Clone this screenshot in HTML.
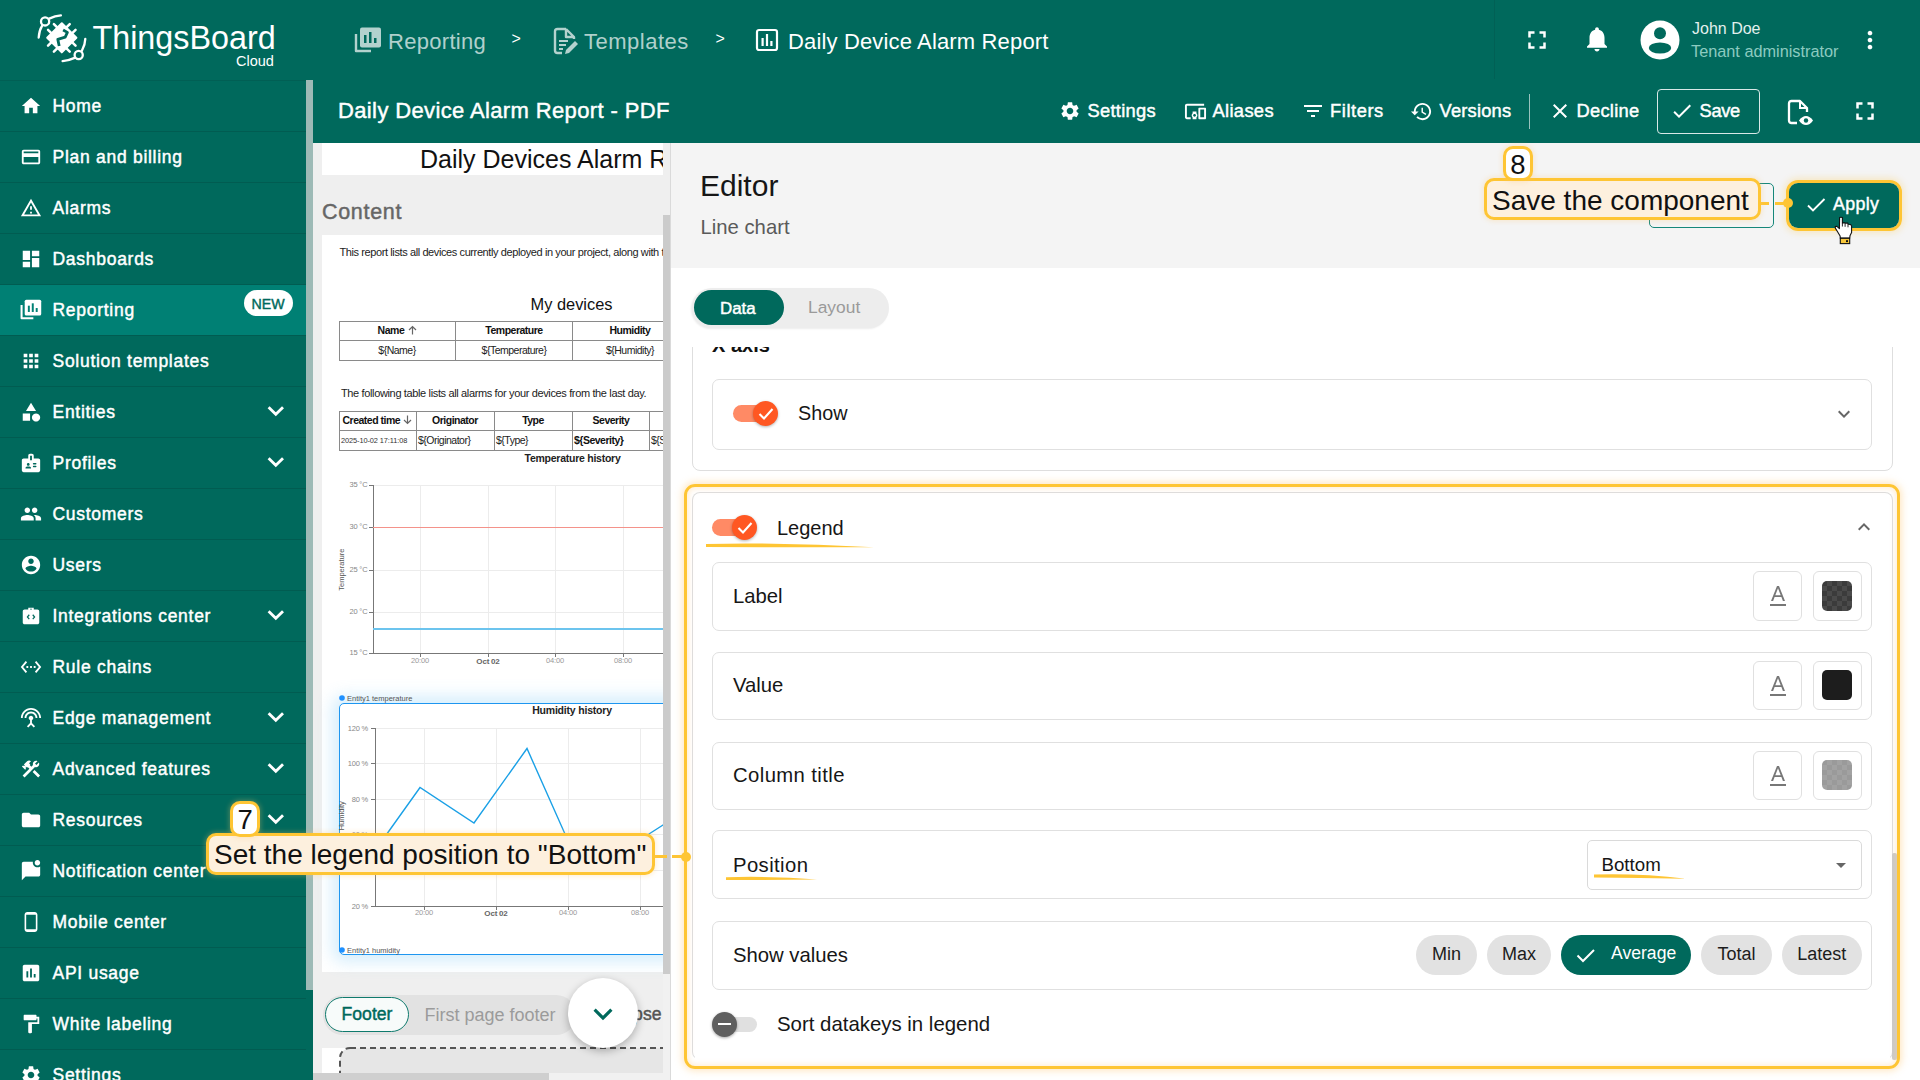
<!DOCTYPE html><html><head><meta charset="utf-8"><style>
html,body{margin:0;padding:0;width:1920px;height:1080px;overflow:hidden;background:#fff;}
body{position:relative;font-family:"Liberation Sans",sans-serif;}
.a{position:absolute;display:block;}
.t{position:absolute;white-space:pre;line-height:1;}
svg.a{overflow:visible;}
</style></head><body>
<div class="a" style="left:0px;top:0px;width:1920px;height:143px;background:#00695c;"></div>
<div class="a" style="left:0px;top:80px;width:306px;height:1px;background:#015f54;"></div>
<div class="a" style="left:1494px;top:0px;width:1px;height:79px;background:#016055;"></div>
<svg class="a" style="left:36px;top:13px" width="52" height="52" viewBox="0 0 52 52">
<g fill="none" stroke="#fff" stroke-width="2.3" stroke-linecap="round">
<path d="M2.7 24.5 C3 20 4 16 6.2 12.6"/><circle cx="9.1" cy="8.4" r="4.1"/><path d="M13.2 5.6 C17 3.8 21 2.7 24.9 2.4"/>
<path d="M49.3 25.9 C49.2 30 48 34 45.9 37.8"/><circle cx="42.7" cy="42" r="4.1"/><path d="M38.6 44.9 C35 46.6 31 47.8 26.6 48.1"/>
<path d="M30.18 14.58l3.54 -3.54 M36.02 20.42l3.54 -3.54 M36.02 29.18l3.54 3.54 M30.18 35.02l3.54 3.54 M21.42 35.02l-3.54 3.54 M15.58 29.18l-3.54 3.54 M15.58 20.42l-3.54 -3.54 M21.42 14.58l-3.54 -3.54" stroke-width="2.5"/>
</g>
<polygon points="25.80,10.20 40.40,24.80 25.80,39.40 11.20,24.80" fill="#fff" stroke="#fff" stroke-width="2" stroke-linejoin="round"/>
<path d="M27.1 17 L31.4 19.4 L29.2 24.2 L21.8 26.4 L23.2 33" fill="none" stroke="#00695c" stroke-width="2.8" stroke-linejoin="round"/>
</svg>
<div class="t" style="left:92.5px;top:21.7px;font-size:32.3px;font-weight:400;color:#fff;">ThingsBoard</div>
<div class="t" style="left:236.0px;top:53.7px;font-size:14.5px;font-weight:400;color:#fff;">Cloud</div>
<svg class="a" style="left:354px;top:27px" width="28" height="27" viewBox="0 0 28 27">
<path d="M2 7v17h15" fill="none" stroke="rgba(255,255,255,0.7)" stroke-width="2.4" stroke-linejoin="round"/>
<rect x="6" y="0.5" width="21" height="20" rx="2" fill="rgba(255,255,255,0.7)"/>
<rect x="10" y="8" width="2.5" height="8" fill="#00695c"/><rect x="15" y="5" width="2.5" height="11" fill="#00695c"/><rect x="20" y="11" width="2.5" height="5" fill="#00695c"/>
</svg>
<div class="t" style="left:388.0px;top:31.4px;font-size:22px;font-weight:400;color:rgba(255,255,255,0.7);letter-spacing:0.3px;">Reporting</div>
<div class="t" style="left:511.5px;top:31.0px;font-size:16px;font-weight:400;color:#fff;">&gt;</div>
<svg class="a" style="left:553px;top:27px" width="26" height="28" viewBox="0 0 26 28">
<path d="M13 2H4.5C3 2 2 3 2 4.5v19C2 25 3 26 4.5 26H9M13 2l8 8v2M13 2v8h8" fill="none" stroke="rgba(255,255,255,0.7)" stroke-width="2.4" stroke-linejoin="round"/>
<path d="M6 14h9M6 18h7M6 22h4" stroke="rgba(255,255,255,0.7)" stroke-width="2.2"/>
<path d="M12 27l1-4 9-9 3 3-9 9z" fill="rgba(255,255,255,0.7)"/>
</svg>
<div class="t" style="left:584.0px;top:31.4px;font-size:22px;font-weight:400;color:rgba(255,255,255,0.7);letter-spacing:0.5px;">Templates</div>
<div class="t" style="left:715.5px;top:31.0px;font-size:16px;font-weight:400;color:#fff;">&gt;</div>
<svg class="a" style="left:755px;top:28px" width="24" height="24" viewBox="0 0 24 24">
<rect x="2" y="2" width="20" height="20" rx="2" fill="none" stroke="#fff" stroke-width="2.2"/>
<rect x="6.5" y="10" width="2.2" height="8" fill="#fff"/><rect x="10.9" y="6" width="2.2" height="12" fill="#fff"/><rect x="15.3" y="13" width="2.2" height="5" fill="#fff"/>
</svg>
<div class="t" style="left:788.0px;top:31.4px;font-size:22px;font-weight:400;color:#fff;letter-spacing:0.15px;">Daily Device Alarm Report</div>
<svg class="a" style="left:1522px;top:24.5px;" width="30" height="30" viewBox="0 0 24 24"><path fill="#fff" d="M7 14H5v5h5v-2H7v-3zm-2-4h2V7h3V5H5v5zm12 7h-3v2h5v-5h-2v3zM14 5v2h3v3h2V5h-5z"/></svg>
<svg class="a" style="left:1582px;top:24px;" width="30" height="30" viewBox="0 0 24 24"><path fill="#fff" d="M12 22c1.1 0 2-.9 2-2h-4c0 1.1.89 2 2 2zm6-6v-5c0-3.07-1.64-5.64-4.5-6.32V4c0-.83-.67-1.5-1.5-1.5s-1.5.67-1.5 1.5v.68C7.63 5.36 6 7.92 6 11v5l-2 2v1h16v-1l-2-2z"/></svg>
<svg class="a" style="left:1640px;top:20px" width="40" height="40" viewBox="0 0 40 40">
<circle cx="20" cy="20" r="19.5" fill="#fff"/>
<circle cx="20" cy="13.2" r="6" fill="#00695c"/>
<ellipse cx="20" cy="28" rx="11.2" ry="5.5" fill="#00695c"/>
</svg>
<div class="t" style="left:1692.0px;top:20.5px;font-size:16px;font-weight:400;color:#e3f0ee;">John Doe</div>
<div class="t" style="left:1691.0px;top:43.2px;font-size:16.3px;font-weight:400;color:#8ccbc0;">Tenant administrator</div>
<svg class="a" style="left:1856px;top:26px;" width="28" height="28" viewBox="0 0 24 24"><path fill="#fff" d="M12 8c1.1 0 2-.9 2-2s-.9-2-2-2-2 .9-2 2 .9 2 2 2zm0 2c-1.1 0-2 .9-2 2s.9 2 2 2 2-.9 2-2-.9-2-2-2zm0 6c-1.1 0-2 .9-2 2s.9 2 2 2 2-.9 2-2-.9-2-2-2z"/></svg>
<div class="t" style="left:338.0px;top:100.2px;font-size:22px;font-weight:400;color:#fff;-webkit-text-stroke:0.45px #fff;letter-spacing:0.37px;">Daily Device Alarm Report - PDF</div>
<svg class="a" style="left:1059px;top:100px;" width="22" height="22" viewBox="0 0 24 24"><path fill="#fff" d="M19.14 12.94c.04-.3.06-.61.06-.94 0-.32-.02-.64-.07-.94l2.03-1.58c.18-.14.23-.41.12-.61l-1.92-3.32c-.12-.22-.37-.29-.59-.22l-2.39.96c-.5-.38-1.03-.7-1.62-.94l-.36-2.54c-.04-.24-.24-.41-.48-.41h-3.84c-.24 0-.43.17-.47.41l-.36 2.540c-.59.24-1.13.57-1.62.94l-2.39-.96c-.22-.08-.47 0-.59.22L2.74 8.87c-.12.21-.08.47.12.61l2.03 1.58c-.05.3-.09.63-.09.94s.02.64.07.94l-2.03 1.58c-.18.14-.23.41-.12.61l1.92 3.32c.12.22.37.29.59.22l2.39-.96c.5.38 1.03.7 1.62.94l.36 2.54c.05.24.24.41.48.41h3.84c.24 0 .44-.17.47-.41l.36-2.54c.59-.24 1.13-.56 1.62-.94l2.39.96c.22.08.47 0 .59-.22l1.92-3.32c.12-.22.07-.47-.12-.61l-2.01-1.58zM12 15.6c-1.98 0-3.6-1.62-3.6-3.6s1.62-3.6 3.6-3.6 3.6 1.62 3.6 3.6-1.62 3.6-3.6 3.6z"/></svg>
<div class="t" style="left:1087.5px;top:102.0px;font-size:18.3px;font-weight:400;color:#fff;-webkit-text-stroke:0.45px #fff;letter-spacing:0.3px;">Settings</div>
<svg class="a" style="left:1184px;top:100px;" width="23" height="23" viewBox="0 0 24 24"><path fill="#fff" d="M3 6h18V4H3c-1.1 0-2 .9-2 2v12c0 1.1.9 2 2 2h4v-2H3V6zm10 6H9v1.78c-.61.55-1 1.33-1 2.22s.39 1.67 1 2.22V20h4v-1.78c.61-.55 1-1.34 1-2.22s-.39-1.67-1-2.22V12zm-2 5.5c-.83 0-1.5-.67-1.5-1.5s.67-1.5 1.5-1.5 1.5.67 1.5 1.5-.67 1.5-1.5 1.5zM22 8h-6c-.5 0-1 .5-1 1v10c0 .5.5 1 1 1h6c.5 0 1-.5 1-1V9c0-.5-.5-1-1-1zm-1 10h-4v-8h4v8z"/></svg>
<div class="t" style="left:1212.5px;top:102.0px;font-size:18.3px;font-weight:400;color:#fff;-webkit-text-stroke:0.45px #fff;letter-spacing:0.35px;">Aliases</div>
<svg class="a" style="left:1301px;top:99px;" width="24" height="24" viewBox="0 0 24 24"><path fill="#fff" d="M10 18h4v-2h-4v2zM3 6v2h18V6H3zm3 7h12v-2H6v2z"/></svg>
<div class="t" style="left:1330.0px;top:102.0px;font-size:18.3px;font-weight:400;color:#fff;-webkit-text-stroke:0.45px #fff;letter-spacing:0.58px;">Filters</div>
<svg class="a" style="left:1410px;top:100px;" width="23" height="23" viewBox="0 0 24 24"><path fill="#fff" d="M13 3c-4.97 0-9 4.03-9 9H1l3.89 3.89.07.14L9 12H6c0-3.87 3.13-7 7-7s7 3.13 7 7-3.13 7-7 7c-1.93 0-3.68-.79-4.94-2.06l-1.42 1.42C8.27 19.99 10.51 21 13 21c4.97 0 9-4.03 9-9s-4.03-9-9-9zm-1 5v5l4.28 2.54.72-1.21-3.5-2.08V8H12z"/></svg>
<div class="t" style="left:1439.5px;top:102.0px;font-size:18.3px;font-weight:400;color:#fff;-webkit-text-stroke:0.45px #fff;letter-spacing:0.21px;">Versions</div>
<div class="a" style="left:1529px;top:94px;width:1px;height:35px;background:rgba(255,255,255,0.6);"></div>
<svg class="a" style="left:1548px;top:99px;" width="24" height="24" viewBox="0 0 24 24"><path fill="#fff" d="M19 6.41L17.59 5 12 10.59 6.41 5 5 6.41 10.59 12 5 17.59 6.41 19 12 13.41 17.59 19 19 17.59 13.41 12z"/></svg>
<div class="t" style="left:1576.5px;top:102.0px;font-size:18.3px;font-weight:400;color:#fff;-webkit-text-stroke:0.45px #fff;letter-spacing:0.27px;">Decline</div>
<div class="a" style="left:1657px;top:89px;width:103px;height:45px;box-sizing:border-box;border:1px solid rgba(255,255,255,0.85);border-radius:4px;"></div>
<svg class="a" style="left:1670px;top:99px;" width="24" height="24" viewBox="0 0 24 24"><path fill="#fff" d="M9 16.17L4.83 12l-1.42 1.41L9 19 21 7l-1.41-1.41z"/></svg>
<div class="t" style="left:1699.5px;top:102.0px;font-size:18.3px;font-weight:400;color:#fff;-webkit-text-stroke:0.45px #fff;letter-spacing:-0.3px;">Save</div>
<svg class="a" style="left:1786px;top:99px" width="28" height="28" viewBox="0 0 28 28">
<path d="M11 24H5.5C4 24 3 23 3 21.5v-17C3 3 4 2 5.5 2H14l7 7v4" fill="none" stroke="#fff" stroke-width="2.3" stroke-linejoin="round"/>
<path d="M14 2v7h7" fill="none" stroke="#fff" stroke-width="2"/>
<path d="M13 21.5c2-3 4.5-4.5 7-4.5s5 1.5 7 4.5c-2 3-4.5 4.5-7 4.5s-5-1.5-7-4.5z" fill="#fff"/>
<circle cx="20" cy="21.5" r="2.2" fill="#00695c"/>
</svg>
<svg class="a" style="left:1850px;top:96px;" width="30" height="30" viewBox="0 0 24 24"><path fill="#fff" d="M7 14H5v5h5v-2H7v-3zm-2-4h2V7h3V5H5v5zm12 7h-3v2h5v-5h-2v3zM14 5v2h3v3h2V5h-5z"/></svg>
<div class="a" style="left:0px;top:81px;width:306px;height:999px;background:#00695c;"></div>
<svg class="a" style="left:20px;top:94.5px;" width="22" height="22" viewBox="0 0 24 24"><path fill="#fff" d="M10 20v-6h4v6h5v-8h3L12 3 2 12h3v8z"/></svg>
<div class="t" style="left:52.5px;top:97.8px;font-size:17.5px;font-weight:400;color:#fff;-webkit-text-stroke:0.45px #fff;letter-spacing:0.72px;">Home</div>
<div class="a" style="left:0px;top:131px;width:306px;height:1px;background:#015c51;"></div>
<svg class="a" style="left:20px;top:145.5px;" width="22" height="22" viewBox="0 0 24 24"><path fill="#fff" d="M20 4H4c-1.11 0-1.99.89-1.99 2L2 18c0 1.11.89 2 2 2h16c1.11 0 2-.89 2-2V6c0-1.11-.89-2-2-2zm0 14H4v-6h16v6zm0-10H4V6h16v2z"/></svg>
<div class="t" style="left:52.5px;top:148.8px;font-size:17.5px;font-weight:400;color:#fff;-webkit-text-stroke:0.45px #fff;letter-spacing:0.72px;">Plan and billing</div>
<div class="a" style="left:0px;top:182px;width:306px;height:1px;background:#015c51;"></div>
<svg class="a" style="left:20px;top:196.5px;" width="22" height="22" viewBox="0 0 24 24"><path fill="#fff" d="M12 5.99L19.53 19H4.47L12 5.99M12 2L1 21h22L12 2zm1 14h-2v2h2v-2zm0-6h-2v4h2v-4z"/></svg>
<div class="t" style="left:52.5px;top:199.8px;font-size:17.5px;font-weight:400;color:#fff;-webkit-text-stroke:0.45px #fff;letter-spacing:0.72px;">Alarms</div>
<div class="a" style="left:0px;top:233px;width:306px;height:1px;background:#015c51;"></div>
<svg class="a" style="left:20px;top:247.5px;" width="22" height="22" viewBox="0 0 24 24"><path fill="#fff" d="M3 13h8V3H3v10zm0 8h8v-6H3v6zm10 0h8V11h-8v10zm0-18v6h8V3h-8z"/></svg>
<div class="t" style="left:52.5px;top:250.8px;font-size:17.5px;font-weight:400;color:#fff;-webkit-text-stroke:0.45px #fff;letter-spacing:0.72px;">Dashboards</div>
<div class="a" style="left:0px;top:285px;width:306px;height:50px;background:#008074;"></div>
<div class="a" style="left:0px;top:284px;width:306px;height:1px;background:#015c51;"></div>
<svg class="a" style="left:20px;top:298.5px" width="22" height="22" viewBox="0 0 28 27">
<path d="M2 7v17h15" fill="none" stroke="#fff" stroke-width="2.6" stroke-linejoin="round"/>
<rect x="6" y="0.5" width="21" height="20" rx="2" fill="#fff"/>
<rect x="10" y="8" width="2.5" height="8" fill="#008074"/><rect x="15" y="5" width="2.5" height="11" fill="#008074"/><rect x="20" y="11" width="2.5" height="5" fill="#008074"/>
</svg>
<div class="t" style="left:52.5px;top:301.8px;font-size:17.5px;font-weight:400;color:#fff;-webkit-text-stroke:0.45px #fff;letter-spacing:0.72px;">Reporting</div>
<div class="a" style="left:0px;top:335px;width:306px;height:1px;background:#015c51;"></div>
<svg class="a" style="left:20px;top:349.5px;" width="22" height="22" viewBox="0 0 24 24"><path fill="#fff" d="M4 8h4V4H4v4zm6 12h4v-4h-4v4zm-6 0h4v-4H4v4zm0-6h4v-4H4v4zm6 0h4v-4h-4v4zm6-10v4h4V4h-4zm-6 4h4V4h-4v4zm6 6h4v-4h-4v4zm0 6h4v-4h-4v4z"/></svg>
<div class="t" style="left:52.5px;top:352.8px;font-size:17.5px;font-weight:400;color:#fff;-webkit-text-stroke:0.45px #fff;letter-spacing:0.72px;">Solution templates</div>
<div class="a" style="left:0px;top:386px;width:306px;height:1px;background:#015c51;"></div>
<svg class="a" style="left:20px;top:400.5px;" width="22" height="22" viewBox="0 0 24 24"><path fill="#fff" d="M12 2l-5.5 9h11z M17.5 13.5a4.5 4.5 0 1 0 0.01 0z M3 13.5h8v8H3z"/></svg>
<div class="t" style="left:52.5px;top:403.8px;font-size:17.5px;font-weight:400;color:#fff;-webkit-text-stroke:0.45px #fff;letter-spacing:0.72px;">Entities</div>
<svg class="a" style="left:266px;top:404.3px" width="20" height="14" viewBox="0 0 20 14"><path d="M2.6 3.2L9.8 10.3L17 3.2" fill="none" stroke="#fff" stroke-width="2.8"/></svg>
<div class="a" style="left:0px;top:437px;width:306px;height:1px;background:#015c51;"></div>
<svg class="a" style="left:20px;top:451.5px;" width="22" height="22" viewBox="0 0 24 24"><path fill="#fff" d="M20 7h-5V4c0-1.1-.9-2-2-2h-2c-1.1 0-2 .9-2 2v3H4c-1.1 0-2 .9-2 2v11c0 1.1.9 2 2 2h16c1.1 0 2-.9 2-2V9c0-1.1-.9-2-2-2zM9 12c.83 0 1.5.67 1.5 1.5S9.83 15 9 15s-1.5-.67-1.5-1.5S8.17 12 9 12zm3 6H6v-.43c0-.6.36-1.15.92-1.39.64-.28 1.34-.43 2.08-.43s1.44.15 2.08.43c.55.24.92.78.92 1.39V18zm1-9h-2V4h2v5zm4.25 7.5h-2.5c-.41 0-.75-.34-.75-.75s.34-.75.75-.75h2.5c.41 0 .75.34.75.75s-.34.75-.75.75zm0-3h-2.5c-.41 0-.75-.34-.75-.75s.34-.75.75-.75h2.5c.41 0 .75.34.75.75s-.34.75-.75.75z"/></svg>
<div class="t" style="left:52.5px;top:454.8px;font-size:17.5px;font-weight:400;color:#fff;-webkit-text-stroke:0.45px #fff;letter-spacing:0.72px;">Profiles</div>
<svg class="a" style="left:266px;top:455.3px" width="20" height="14" viewBox="0 0 20 14"><path d="M2.6 3.2L9.8 10.3L17 3.2" fill="none" stroke="#fff" stroke-width="2.8"/></svg>
<div class="a" style="left:0px;top:488px;width:306px;height:1px;background:#015c51;"></div>
<svg class="a" style="left:20px;top:502.5px;" width="22" height="22" viewBox="0 0 24 24"><path fill="#fff" d="M16 11c1.66 0 2.99-1.34 2.99-3S17.66 5 16 5c-1.66 0-3 1.34-3 3s1.34 3 3 3zm-8 0c1.66 0 2.99-1.34 2.99-3S9.66 5 8 5C6.34 5 5 6.34 5 8s1.34 3 3 3zm0 2c-2.33 0-7 1.17-7 3.5V19h14v-2.5c0-2.33-4.67-3.5-7-3.5zm8 0c-.29 0-.62.02-.97.05 1.16.84 1.97 1.97 1.97 3.45V19h6v-2.5c0-2.33-4.67-3.5-7-3.5z"/></svg>
<div class="t" style="left:52.5px;top:505.8px;font-size:17.5px;font-weight:400;color:#fff;-webkit-text-stroke:0.45px #fff;letter-spacing:0.72px;">Customers</div>
<div class="a" style="left:0px;top:539px;width:306px;height:1px;background:#015c51;"></div>
<svg class="a" style="left:20px;top:553.5px;" width="22" height="22" viewBox="0 0 24 24"><path fill="#fff" d="M12 2C6.48 2 2 6.48 2 12s4.48 10 10 10 10-4.48 10-10S17.52 2 12 2zm0 3c1.66 0 3 1.34 3 3s-1.34 3-3 3-3-1.34-3-3 1.34-3 3-3zm0 14.2c-2.5 0-4.71-1.28-6-3.22.03-1.99 4-3.08 6-3.08 1.99 0 5.97 1.09 6 3.08-1.29 1.94-3.5 3.22-6 3.22z"/></svg>
<div class="t" style="left:52.5px;top:556.8px;font-size:17.5px;font-weight:400;color:#fff;-webkit-text-stroke:0.45px #fff;letter-spacing:0.72px;">Users</div>
<div class="a" style="left:0px;top:590px;width:306px;height:1px;background:#015c51;"></div>
<svg class="a" style="left:20px;top:604.5px;" width="22" height="22" viewBox="0 0 24 24"><path fill="#fff" d="M9 3h6v2h4c1.1 0 2 .9 2 2v12c0 1.1-.9 2-2 2H5c-1.1 0-2-.9-2-2V7c0-1.1.9-2 2-2h4zM11 5h2V4h-2zM9.6 10.2L7.2 13l2.4 2.8 1-.9-1.6-1.9 1.6-1.9zM14.4 10.2l-1 .9 1.6 1.9-1.6 1.9 1 .9 2.4-2.8z"/></svg>
<div class="t" style="left:52.5px;top:607.8px;font-size:17.5px;font-weight:400;color:#fff;-webkit-text-stroke:0.45px #fff;letter-spacing:0.72px;">Integrations center</div>
<svg class="a" style="left:266px;top:608.3px" width="20" height="14" viewBox="0 0 20 14"><path d="M2.6 3.2L9.8 10.3L17 3.2" fill="none" stroke="#fff" stroke-width="2.8"/></svg>
<div class="a" style="left:0px;top:641px;width:306px;height:1px;background:#015c51;"></div>
<svg class="a" style="left:20px;top:655.5px;" width="22" height="22" viewBox="0 0 24 24"><path fill="#fff" d="M7.77 6.76L6.23 5.48.82 12l5.41 6.52 1.54-1.28L3.42 12l4.35-5.24zM7 13h2v-2H7v2zm10-2h-2v2h2v-2zm-6 2h2v-2h-2v2zm6.77-7.52l-1.54 1.28L20.58 12l-4.35 5.24 1.54 1.28L23.18 12l-5.41-6.52z"/></svg>
<div class="t" style="left:52.5px;top:658.8px;font-size:17.5px;font-weight:400;color:#fff;-webkit-text-stroke:0.45px #fff;letter-spacing:0.72px;">Rule chains</div>
<div class="a" style="left:0px;top:692px;width:306px;height:1px;background:#015c51;"></div>
<svg class="a" style="left:20px;top:706.5px;" width="22" height="22" viewBox="0 0 24 24"><path fill="#fff" d="M12 5c-3.87 0-7 3.13-7 7h2c0-2.76 2.24-5 5-5s5 2.24 5 5h2c0-3.87-3.13-7-7-7zm1 9.29c.88-.39 1.5-1.26 1.5-2.29 0-1.380-1.12-2.5-2.5-2.5S9.5 10.62 9.5 12c0 1.02.62 1.9 1.5 2.29v3.3L7.59 21 9 22.41l3-3 3 3L16.41 21 13 17.59v-3.3zM12 1C5.93 1 1 5.93 1 12h2c0-4.97 4.03-9 9-9s9 4.03 9 9h2c0-6.070-4.93-11-11-11z"/></svg>
<div class="t" style="left:52.5px;top:709.8px;font-size:17.5px;font-weight:400;color:#fff;-webkit-text-stroke:0.45px #fff;letter-spacing:0.72px;">Edge management</div>
<svg class="a" style="left:266px;top:710.3px" width="20" height="14" viewBox="0 0 20 14"><path d="M2.6 3.2L9.8 10.3L17 3.2" fill="none" stroke="#fff" stroke-width="2.8"/></svg>
<div class="a" style="left:0px;top:743px;width:306px;height:1px;background:#015c51;"></div>
<svg class="a" style="left:20px;top:757.5px;" width="22" height="22" viewBox="0 0 24 24"><path fill="#fff" d="M13.78 15.3l6 6 2.11-2.16-6-6-2.11 2.16zM17.5 10c1.93 0 3.5-1.57 3.5-3.5 0-.58-.16-1.12-.41-1.6l-2.7 2.7-1.49-1.49 2.7-2.7c-.48-.25-1.02-.41-1.6-.41C15.57 3 14 4.57 14 6.5c0 .41.08.8.21 1.16l-1.85 1.85-1.78-1.78.71-.71-1.41-1.41L12 3.49c-1.17-1.17-3.07-1.17-4.24 0L4.22 7.03l1.41 1.41H2.81l-.71.71 3.54 3.54.71-.71V9.15l1.41 1.41.71-.71 1.78 1.78-7.41 7.41 2.12 2.12L16.34 9.79c.36.13.75.21 1.16.21z"/></svg>
<div class="t" style="left:52.5px;top:760.8px;font-size:17.5px;font-weight:400;color:#fff;-webkit-text-stroke:0.45px #fff;letter-spacing:0.72px;">Advanced features</div>
<svg class="a" style="left:266px;top:761.3px" width="20" height="14" viewBox="0 0 20 14"><path d="M2.6 3.2L9.8 10.3L17 3.2" fill="none" stroke="#fff" stroke-width="2.8"/></svg>
<div class="a" style="left:0px;top:794px;width:306px;height:1px;background:#015c51;"></div>
<svg class="a" style="left:20px;top:808.5px;" width="22" height="22" viewBox="0 0 24 24"><path fill="#fff" d="M10 4H4c-1.1 0-1.99.9-1.99 2L2 18c0 1.1.9 2 2 2h16c1.1 0 2-.9 2-2V8c0-1.1-.9-2-2-2h-8l-2-2z"/></svg>
<div class="t" style="left:52.5px;top:811.8px;font-size:17.5px;font-weight:400;color:#fff;-webkit-text-stroke:0.45px #fff;letter-spacing:0.72px;">Resources</div>
<svg class="a" style="left:266px;top:812.3px" width="20" height="14" viewBox="0 0 20 14"><path d="M2.6 3.2L9.8 10.3L17 3.2" fill="none" stroke="#fff" stroke-width="2.8"/></svg>
<div class="a" style="left:0px;top:845px;width:306px;height:1px;background:#015c51;"></div>
<svg class="a" style="left:20px;top:859.5px;" width="22" height="22" viewBox="0 0 24 24"><path fill="#fff" d="M22 6.98V16c0 1.1-.9 2-2 2H6l-4 4V4c0-1.1.9-2 2-2h10.1c-.06.32-.1.66-.1 1 0 2.76 2.24 5 5 5 1.13 0 2.16-.39 3-1.02zM16 3c0 1.66 1.34 3 3 3s3-1.34 3-3-1.34-3-3-3-3 1.34-3 3z"/></svg>
<div class="t" style="left:52.5px;top:862.8px;font-size:17.5px;font-weight:400;color:#fff;-webkit-text-stroke:0.45px #fff;letter-spacing:0.72px;">Notification center</div>
<div class="a" style="left:0px;top:896px;width:306px;height:1px;background:#015c51;"></div>
<svg class="a" style="left:20px;top:910.5px;" width="22" height="22" viewBox="0 0 24 24"><path fill="#fff" d="M16 1H8C6.34 1 5 2.34 5 4v16c0 1.66 1.34 3 3 3h8c1.66 0 3-1.34 3-3V4c0-1.66-1.34-3-3-3zm1.25 19H6.75V4h10.5v16z"/></svg>
<div class="t" style="left:52.5px;top:913.8px;font-size:17.5px;font-weight:400;color:#fff;-webkit-text-stroke:0.45px #fff;letter-spacing:0.72px;">Mobile center</div>
<div class="a" style="left:0px;top:947px;width:306px;height:1px;background:#015c51;"></div>
<svg class="a" style="left:20px;top:961.5px;" width="22" height="22" viewBox="0 0 24 24"><path fill="#fff" d="M19 3H5c-1.1 0-2 .9-2 2v14c0 1.1.9 2 2 2h14c1.1 0 2-.9 2-2V5c0-1.1-.9-2-2-2zM9 17H7v-7h2v7zm4 0h-2V7h2v10zm4 0h-2v-4h2v4z"/></svg>
<div class="t" style="left:52.5px;top:964.8px;font-size:17.5px;font-weight:400;color:#fff;-webkit-text-stroke:0.45px #fff;letter-spacing:0.72px;">API usage</div>
<div class="a" style="left:0px;top:998px;width:306px;height:1px;background:#015c51;"></div>
<svg class="a" style="left:20px;top:1012.5px;" width="22" height="22" viewBox="0 0 24 24"><path fill="#fff" d="M18 4V3c0-.55-.45-1-1-1H5c-.55 0-1 .45-1 1v4c0 .55.45 1 1 1h12c.55 0 1-.45 1-1V6h1v4H9v11c0 .55.45 1 1 1h2c.55 0 1-.45 1-1v-9h8V4h-3z"/></svg>
<div class="t" style="left:52.5px;top:1015.8px;font-size:17.5px;font-weight:400;color:#fff;-webkit-text-stroke:0.45px #fff;letter-spacing:0.72px;">White labeling</div>
<div class="a" style="left:0px;top:1049px;width:306px;height:1px;background:#015c51;"></div>
<svg class="a" style="left:20px;top:1063.5px;" width="22" height="22" viewBox="0 0 24 24"><path fill="#fff" d="M19.14 12.94c.04-.3.06-.61.06-.94 0-.32-.02-.64-.07-.94l2.03-1.58c.18-.14.23-.41.12-.61l-1.92-3.32c-.12-.22-.37-.29-.59-.22l-2.39.96c-.5-.38-1.03-.7-1.62-.94l-.36-2.54c-.04-.24-.24-.41-.48-.41h-3.84c-.24 0-.43.17-.47.41l-.36 2.540c-.59.24-1.13.57-1.62.94l-2.39-.96c-.22-.08-.47 0-.59.22L2.74 8.87c-.12.21-.08.47.12.61l2.03 1.58c-.05.3-.09.63-.09.94s.02.64.07.94l-2.03 1.58c-.18.14-.23.41-.12.61l1.92 3.32c.12.22.37.29.59.22l2.39-.96c.5.38 1.03.7 1.62.94l.36 2.54c.05.24.24.41.48.41h3.84c.24 0 .44-.17.47-.41l.36-2.54c.59-.24 1.13-.56 1.62-.94l2.39.96c.22.08.47 0 .59-.22l1.92-3.32c.12-.22.07-.47-.12-.61l-2.01-1.58zM12 15.6c-1.98 0-3.6-1.62-3.6-3.6s1.62-3.6 3.6-3.6 3.6 1.62 3.6 3.6-1.62 3.6-3.6 3.6z"/></svg>
<div class="t" style="left:52.5px;top:1066.8px;font-size:17.5px;font-weight:400;color:#fff;-webkit-text-stroke:0.45px #fff;letter-spacing:0.72px;">Settings</div>
<div class="a" style="left:244px;top:290px;width:49px;height:25.5px;background:#fff;border-radius:13px;"></div>
<div class="t" style="left:251.5px;top:297.0px;font-size:14.2px;font-weight:400;color:#00695c;-webkit-text-stroke:0.4px #00695c;letter-spacing:0px;">NEW</div>
<div class="a" style="left:306px;top:80px;width:7px;height:910px;background:#9dbab6;"></div>
<div class="a" style="left:306px;top:990px;width:7px;height:90px;background:#00695c;"></div>
<div class="a" style="left:313px;top:143px;width:357px;height:937px;background:#efefef;"></div>
<div class="a" style="left:0;top:0;width:663px;height:1080px;overflow:hidden;">
<div class="a" style="left:322px;top:143px;width:400px;height:32px;background:#fff;"></div>
<div class="t" style="left:420.0px;top:146.5px;font-size:25px;font-weight:400;color:#111;">Daily Devices Alarm Report</div>
<div class="t" style="left:322.0px;top:201.8px;font-size:21.5px;font-weight:400;color:#666;-webkit-text-stroke:0.45px #666;letter-spacing:0.68px;">Content</div>
<div class="a" style="left:322px;top:234.5px;width:400px;height:737.5px;background:#fff;"></div>
<div class="t" style="left:339.5px;top:247.0px;font-size:11px;font-weight:400;color:#222;letter-spacing:-0.4px;">This report lists all devices currently deployed in your project, along with the</div>
<div class="t" style="left:530.5px;top:296.4px;font-size:16.4px;font-weight:400;color:#111;">My devices</div>
<div class="a" style="left:339px;top:321px;width:400px;height:1px;background:#8a8a8a;"></div>
<div class="a" style="left:339px;top:340px;width:400px;height:1px;background:#8a8a8a;"></div>
<div class="a" style="left:339px;top:360px;width:400px;height:1px;background:#8a8a8a;"></div>
<div class="a" style="left:339px;top:321px;width:1px;height:40px;background:#8a8a8a;"></div>
<div class="a" style="left:455px;top:321px;width:1px;height:40px;background:#8a8a8a;"></div>
<div class="a" style="left:572px;top:321px;width:1px;height:40px;background:#8a8a8a;"></div>
<div class="t" style="left:377.5px;top:325.1px;font-size:10.5px;font-weight:700;color:#111;letter-spacing:-0.4px;">Name</div>
<svg class="a" style="left:407.5px;top:325px" width="9" height="10" viewBox="0 0 9 10"><path d="M4.5 9.5V1.5M1 5l3.5-3.5L8 5" fill="none" stroke="#666" stroke-width="1.2"/></svg>
<div class="t" style="left:364.0px;width:300px;text-align:center;top:325.1px;font-size:10.5px;font-weight:700;color:#111;letter-spacing:-0.5px;">Temperature</div>
<div class="t" style="left:480.0px;width:300px;text-align:center;top:325.1px;font-size:10.5px;font-weight:700;color:#111;letter-spacing:-0.5px;">Humidity</div>
<div class="t" style="left:247.0px;width:300px;text-align:center;top:344.6px;font-size:10.5px;font-weight:400;color:#222;letter-spacing:-0.5px;">${Name}</div>
<div class="t" style="left:364.0px;width:300px;text-align:center;top:344.6px;font-size:10.5px;font-weight:400;color:#222;letter-spacing:-0.5px;">${Temperature}</div>
<div class="t" style="left:480.0px;width:300px;text-align:center;top:344.6px;font-size:10.5px;font-weight:400;color:#222;letter-spacing:-0.5px;">${Humidity}</div>
<div class="t" style="left:341.0px;top:387.5px;font-size:11px;font-weight:400;color:#222;letter-spacing:-0.36px;">The following table lists all alarms for your devices from the last day.</div>
<div class="a" style="left:339px;top:411px;width:400px;height:1px;background:#8a8a8a;"></div>
<div class="a" style="left:339px;top:430px;width:400px;height:1px;background:#8a8a8a;"></div>
<div class="a" style="left:339px;top:450px;width:400px;height:1px;background:#8a8a8a;"></div>
<div class="a" style="left:339px;top:411px;width:1px;height:40px;background:#8a8a8a;"></div>
<div class="a" style="left:416px;top:411px;width:1px;height:40px;background:#8a8a8a;"></div>
<div class="a" style="left:494px;top:411px;width:1px;height:40px;background:#8a8a8a;"></div>
<div class="a" style="left:572px;top:411px;width:1px;height:40px;background:#8a8a8a;"></div>
<div class="a" style="left:649px;top:411px;width:1px;height:40px;background:#8a8a8a;"></div>
<div class="t" style="left:342.5px;top:414.6px;font-size:10.5px;font-weight:700;color:#111;letter-spacing:-0.5px;">Created time</div>
<svg class="a" style="left:402.5px;top:414.5px" width="9" height="10" viewBox="0 0 9 10"><path d="M4.5 0.5V8.5M1 5l3.5 3.5L8 5" fill="none" stroke="#666" stroke-width="1.2"/></svg>
<div class="t" style="left:305.0px;width:300px;text-align:center;top:414.6px;font-size:10.5px;font-weight:700;color:#111;letter-spacing:-0.5px;">Originator</div>
<div class="t" style="left:383.0px;width:300px;text-align:center;top:414.6px;font-size:10.5px;font-weight:700;color:#111;letter-spacing:-0.5px;">Type</div>
<div class="t" style="left:461.0px;width:300px;text-align:center;top:414.6px;font-size:10.5px;font-weight:700;color:#111;letter-spacing:-0.5px;">Severity</div>
<div class="t" style="left:341.0px;top:436.7px;font-size:7.4px;font-weight:400;color:#333;letter-spacing:-0.1px;">2025-10-02 17:11:08</div>
<div class="t" style="left:418.0px;top:434.5px;font-size:10.5px;font-weight:400;color:#222;letter-spacing:-0.5px;">${Originator}</div>
<div class="t" style="left:496.0px;top:434.5px;font-size:10.5px;font-weight:400;color:#222;letter-spacing:-0.5px;">${Type}</div>
<div class="t" style="left:574.0px;top:434.5px;font-size:10.5px;font-weight:700;color:#111;letter-spacing:-0.5px;">${Severity}</div>
<div class="t" style="left:651.0px;top:434.5px;font-size:10.5px;font-weight:400;color:#222;letter-spacing:-0.5px;">${Status}</div>
<div class="t" style="left:422.5px;width:300px;text-align:center;top:452.6px;font-size:10.5px;font-weight:700;color:#222;letter-spacing:-0.25px;">Temperature history</div>
<div class="a" style="left:373px;top:485px;width:300px;height:1px;background:#ececec;"></div>
<div class="a" style="left:373px;top:527px;width:300px;height:1px;background:#ececec;"></div>
<div class="a" style="left:373px;top:570px;width:300px;height:1px;background:#ececec;"></div>
<div class="a" style="left:373px;top:612px;width:300px;height:1px;background:#ececec;"></div>
<div class="a" style="left:420px;top:485px;width:1px;height:169px;background:#ececec;"></div>
<div class="a" style="left:488px;top:485px;width:1px;height:169px;background:#ececec;"></div>
<div class="a" style="left:555px;top:485px;width:1px;height:169px;background:#ececec;"></div>
<div class="a" style="left:623px;top:485px;width:1px;height:169px;background:#ececec;"></div>
<div class="a" style="left:373px;top:485px;width:1px;height:169px;background:#777;"></div>
<div class="a" style="left:373px;top:653px;width:300px;height:1px;background:#777;"></div>
<div class="a" style="left:369px;top:485px;width:4px;height:1px;background:#777;"></div>
<div class="t" style="left:349.5px;top:481.2px;font-size:7.5px;font-weight:400;color:#888;letter-spacing:-0.2px;">35 °C</div>
<div class="a" style="left:369px;top:527px;width:4px;height:1px;background:#777;"></div>
<div class="t" style="left:349.5px;top:523.2px;font-size:7.5px;font-weight:400;color:#888;letter-spacing:-0.2px;">30 °C</div>
<div class="a" style="left:369px;top:570px;width:4px;height:1px;background:#777;"></div>
<div class="t" style="left:349.5px;top:566.2px;font-size:7.5px;font-weight:400;color:#888;letter-spacing:-0.2px;">25 °C</div>
<div class="a" style="left:369px;top:612px;width:4px;height:1px;background:#777;"></div>
<div class="t" style="left:349.5px;top:608.2px;font-size:7.5px;font-weight:400;color:#888;letter-spacing:-0.2px;">20 °C</div>
<div class="a" style="left:369px;top:653px;width:4px;height:1px;background:#777;"></div>
<div class="t" style="left:349.5px;top:649.2px;font-size:7.5px;font-weight:400;color:#888;letter-spacing:-0.2px;">15 °C</div>
<div class="a" style="left:420px;top:654px;width:1px;height:3px;background:#777;"></div>
<div class="a" style="left:488px;top:654px;width:1px;height:3px;background:#777;"></div>
<div class="a" style="left:555px;top:654px;width:1px;height:3px;background:#777;"></div>
<div class="a" style="left:623px;top:654px;width:1px;height:3px;background:#777;"></div>
<div class="t" style="left:270.0px;width:300px;text-align:center;top:657.2px;font-size:7.5px;font-weight:400;color:#999;letter-spacing:-0.2px;">20:00</div>
<div class="t" style="left:338.0px;width:300px;text-align:center;top:657.7px;font-size:8px;font-weight:700;color:#666;letter-spacing:-0.2px;">Oct 02</div>
<div class="t" style="left:405.0px;width:300px;text-align:center;top:657.2px;font-size:7.5px;font-weight:400;color:#999;letter-spacing:-0.2px;">04:00</div>
<div class="t" style="left:473.0px;width:300px;text-align:center;top:657.2px;font-size:7.5px;font-weight:400;color:#999;letter-spacing:-0.2px;">08:00</div>
<div class="a" style="left:373px;top:527px;width:300px;height:1px;background:#f4928a;"></div>
<div class="a" style="left:373px;top:628px;width:300px;height:1.6px;background:#6cc4ee;"></div>
<div class="t" style="left:322px;top:567px;width:40px;text-align:center;font-size:7.5px;color:#555;transform:rotate(-90deg);">Temperature</div>
<div class="a" style="left:339px;top:703px;width:400px;height:251.5px;box-sizing:border-box;border:1.5px solid #1e96f0;border-radius:5px;box-shadow:0 0 16px 7px rgba(120,200,245,0.30);background:#fff;"></div>
<svg class="a" style="left:338px;top:694px" width="8" height="8"><circle cx="4" cy="4" r="2.8" fill="#1e90ff"/></svg>
<div class="t" style="left:347.0px;top:694.5px;font-size:7.5px;font-weight:400;color:#555;">Entity1 temperature</div>
<svg class="a" style="left:338px;top:946px" width="8" height="8"><circle cx="4" cy="4" r="2.8" fill="#1e90ff"/></svg>
<div class="t" style="left:347.0px;top:946.5px;font-size:7.5px;font-weight:400;color:#555;">Entity1 humidity</div>
<div class="t" style="left:422.0px;width:300px;text-align:center;top:705.1px;font-size:10.5px;font-weight:700;color:#222;letter-spacing:-0.2px;">Humidity history</div>
<div class="a" style="left:375px;top:728px;width:300px;height:1px;background:#ececec;"></div>
<div class="a" style="left:375px;top:763px;width:300px;height:1px;background:#ececec;"></div>
<div class="a" style="left:375px;top:799px;width:300px;height:1px;background:#ececec;"></div>
<div class="a" style="left:375px;top:834px;width:300px;height:1px;background:#ececec;"></div>
<div class="a" style="left:375px;top:870px;width:300px;height:1px;background:#ececec;"></div>
<div class="a" style="left:424px;top:728px;width:1px;height:178px;background:#ececec;"></div>
<div class="a" style="left:496px;top:728px;width:1px;height:178px;background:#ececec;"></div>
<div class="a" style="left:568px;top:728px;width:1px;height:178px;background:#ececec;"></div>
<div class="a" style="left:640px;top:728px;width:1px;height:178px;background:#ececec;"></div>
<div class="a" style="left:375px;top:728px;width:1px;height:178px;background:#777;"></div>
<div class="a" style="left:375px;top:906px;width:300px;height:1px;background:#777;"></div>
<div class="a" style="left:371px;top:728px;width:4px;height:1px;background:#777;"></div>
<div class="t" style="left:330px;width:38px;text-align:right;top:724.6px;font-size:7.5px;color:#888;letter-spacing:-0.2px;">120 %</div>
<div class="a" style="left:371px;top:763px;width:4px;height:1px;background:#777;"></div>
<div class="t" style="left:330px;width:38px;text-align:right;top:760.1px;font-size:7.5px;color:#888;letter-spacing:-0.2px;">100 %</div>
<div class="a" style="left:371px;top:799px;width:4px;height:1px;background:#777;"></div>
<div class="t" style="left:330px;width:38px;text-align:right;top:795.6px;font-size:7.5px;color:#888;letter-spacing:-0.2px;">80 %</div>
<div class="a" style="left:371px;top:834px;width:4px;height:1px;background:#777;"></div>
<div class="t" style="left:330px;width:38px;text-align:right;top:831.1px;font-size:7.5px;color:#888;letter-spacing:-0.2px;">60 %</div>
<div class="a" style="left:371px;top:870px;width:4px;height:1px;background:#777;"></div>
<div class="t" style="left:330px;width:38px;text-align:right;top:866.6px;font-size:7.5px;color:#888;letter-spacing:-0.2px;">40 %</div>
<div class="a" style="left:371px;top:906px;width:4px;height:1px;background:#777;"></div>
<div class="t" style="left:330px;width:38px;text-align:right;top:902.6px;font-size:7.5px;color:#888;letter-spacing:-0.2px;">20 %</div>
<div class="a" style="left:424px;top:907px;width:1px;height:3px;background:#777;"></div>
<div class="t" style="left:274.0px;width:300px;text-align:center;top:909.2px;font-size:7.5px;font-weight:400;color:#999;letter-spacing:-0.2px;">20:00</div>
<div class="a" style="left:496px;top:907px;width:1px;height:3px;background:#777;"></div>
<div class="t" style="left:346.0px;width:300px;text-align:center;top:909.7px;font-size:8px;font-weight:700;color:#666;letter-spacing:-0.2px;">Oct 02</div>
<div class="a" style="left:568px;top:907px;width:1px;height:3px;background:#777;"></div>
<div class="t" style="left:418.0px;width:300px;text-align:center;top:909.2px;font-size:7.5px;font-weight:400;color:#999;letter-spacing:-0.2px;">04:00</div>
<div class="a" style="left:640px;top:907px;width:1px;height:3px;background:#777;"></div>
<div class="t" style="left:490.0px;width:300px;text-align:center;top:909.2px;font-size:7.5px;font-weight:400;color:#999;letter-spacing:-0.2px;">08:00</div>
<div class="t" style="left:322px;top:812px;width:40px;text-align:center;font-size:7.5px;color:#555;transform:rotate(-90deg);">Humidity</div>
<svg class="a" style="left:0;top:0" width="700" height="1000"><polyline fill="none" stroke="#1aa0e6" stroke-width="1.4" points="376,851 384,838 420,787.5 474,823 527,748.5 565,834 590,866 620,862 649,834 663,825 680,815"/></svg>
</div>
<div class="a" style="left:663px;top:215px;width:7px;height:759px;background:#cbcbcb;"></div>
<div class="a" style="left:663px;top:974px;width:7px;height:106px;background:#f1f1f1;"></div>
<div class="a" style="left:670px;top:143px;width:1px;height:937px;background:#dadada;"></div>
<div class="a" style="left:671px;top:143px;width:1249px;height:125px;background:#f4f4f4;"></div>
<div class="t" style="left:700.0px;top:171.0px;font-size:30px;font-weight:400;color:#161616;">Editor</div>
<div class="t" style="left:700.5px;top:217.3px;font-size:20.3px;font-weight:400;color:#5a5a5a;">Line chart</div>
<div class="a" style="left:1649px;top:183px;width:125px;height:44.5px;box-sizing:border-box;border:1.3px solid #16877a;border-radius:5px;"></div>
<div class="a" style="left:1786px;top:180px;width:116px;height:51px;box-sizing:border-box;border:3px solid #fec534;border-radius:12px;box-shadow:0 0 6px 2px rgba(254,197,52,0.25);"></div>
<div class="a" style="left:1789px;top:183px;width:110px;height:45px;background:#00695c;border-radius:9px;"></div>
<svg class="a" style="left:1806px;top:197px" width="20" height="16" viewBox="0 0 20 16"><path d="M2 8.5l5 5L18.5 2" fill="none" stroke="#fff" stroke-width="1.9"/></svg>
<div class="t" style="left:1833.0px;top:195.7px;font-size:17.8px;font-weight:400;color:#fff;-webkit-text-stroke:0.45px #fff;letter-spacing:0.37px;">Apply</div>
<div class="a" style="left:692px;top:288px;width:197px;height:40px;background:#ededed;border-radius:20px;box-shadow:-1px 1px 2px rgba(0,0,0,0.08);"></div>
<div class="a" style="left:694px;top:290px;width:89.5px;height:35px;background:#00695c;border-radius:18px;"></div>
<div class="t" style="left:720.0px;top:300.6px;font-size:16.9px;font-weight:400;color:#fff;-webkit-text-stroke:0.45px #fff;letter-spacing:0px;">Data</div>
<div class="t" style="left:808.0px;top:299.0px;font-size:17.4px;font-weight:400;color:#9a9a9a;">Layout</div>
<div class="a" style="left:671px;top:347px;width:1249px;height:733px;overflow:hidden;">
<div class="a" style="left:20.5px;top:-47px;width:1201px;height:170.5px;box-sizing:border-box;border:1px solid #dedede;border-radius:8px;"></div>
<div class="t" style="left:41.0px;top:-12.1px;font-size:20px;font-weight:700;color:#111;">X axis</div>
<div class="a" style="left:41px;top:31.5px;width:1160px;height:71px;box-sizing:border-box;border:1px solid #e0e0e0;border-radius:7px;"></div>
<div class="a" style="left:61.5px;top:58.30000000000001px;width:33px;height:17px;background:#ff8a65;border-radius:9px;"></div>
<div class="a" style="left:82.0px;top:54.30000000000001px;width:25px;height:25px;background:#ff5722;border-radius:50%;box-shadow:0 1px 3px rgba(0,0,0,0.3);"></div>
<svg class="a" style="left:82.0px;top:54.30000000000001px;" width="25" height="25" viewBox="0 0 25 25"><path d="M6.5 13l4.5 4.5L19.5 8" fill="none" stroke="#fff" stroke-width="2.1"/></svg>
<div class="t" style="left:127.0px;top:56.9px;font-size:19.8px;font-weight:400;color:#161616;">Show</div>
<svg class="a" style="left:1161px;top:55px;" width="24" height="24" viewBox="0 0 24 24"><path fill="#666" d="M16.59 8.59L12 13.17 7.41 8.59 6 10l6 6 6-6z"/></svg>
<div class="a" style="left:20.5px;top:144.5px;width:1201px;height:568.5px;box-sizing:border-box;border:1px solid #dedede;border-bottom-color:transparent;border-radius:8px;"></div>
<div class="a" style="left:40.5px;top:171.5px;width:33px;height:17px;background:#ff8a65;border-radius:9px;"></div>
<div class="a" style="left:61.0px;top:167.5px;width:25px;height:25px;background:#ff5722;border-radius:50%;box-shadow:0 1px 3px rgba(0,0,0,0.3);"></div>
<svg class="a" style="left:61.0px;top:167.5px;" width="25" height="25" viewBox="0 0 25 25"><path d="M6.5 13l4.5 4.5L19.5 8" fill="none" stroke="#fff" stroke-width="2.1"/></svg>
<div class="t" style="left:106.0px;top:171.1px;font-size:20px;font-weight:400;color:#161616;">Legend</div>
<svg class="a" style="left:1181px;top:168px;" width="24" height="24" viewBox="0 0 24 24"><path fill="#666" d="M12 8l-6 6 1.41 1.41L12 10.83l4.59 4.58L18 14z"/></svg>
<div class="a" style="left:41px;top:215.29999999999995px;width:1160px;height:68.5px;box-sizing:border-box;border:1px solid #e0e0e0;border-radius:7px;"></div>
<div class="t" style="left:62.0px;top:238.5px;font-size:20.3px;font-weight:400;color:#161616;">Label</div>
<div class="a" style="left:1081.5px;top:224.29999999999995px;width:49.5px;height:49.5px;box-sizing:border-box;border:1px solid #e0e0e0;border-radius:6px;"></div>
<div class="a" style="left:1141.5px;top:224.29999999999995px;width:49.5px;height:49.5px;box-sizing:border-box;border:1px solid #e0e0e0;border-radius:6px;"></div>
<svg class="a" style="left:1094.5px;top:236.29999999999995px;" width="24" height="24" viewBox="0 0 24 24"><path fill="#777" d="M4 21h16v2H4z"/><path fill="#777" d="M11 3h2l6 15h-2.1l-1.5-4H8.6l-1.5 4H5zM9.3 12.2h5.4L12 5.2z"/></svg>
<div class="a" style="left:1151px;top:233.79999999999995px;width:30px;height:30px;background:#3b3b3b;border-radius:5px;background-image:linear-gradient(45deg, rgba(255,255,255,0.08) 25%, transparent 25%, transparent 75%, rgba(255,255,255,0.08) 75%),linear-gradient(45deg, rgba(255,255,255,0.08) 25%, transparent 25%, transparent 75%, rgba(255,255,255,0.08) 75%);background-size:10px 10px;background-position:0 0,5px 5px;"></div>
<div class="a" style="left:41px;top:304.79999999999995px;width:1160px;height:68.5px;box-sizing:border-box;border:1px solid #e0e0e0;border-radius:7px;"></div>
<div class="t" style="left:62.0px;top:328.0px;font-size:20.3px;font-weight:400;color:#161616;">Value</div>
<div class="a" style="left:1081.5px;top:313.79999999999995px;width:49.5px;height:49.5px;box-sizing:border-box;border:1px solid #e0e0e0;border-radius:6px;"></div>
<div class="a" style="left:1141.5px;top:313.79999999999995px;width:49.5px;height:49.5px;box-sizing:border-box;border:1px solid #e0e0e0;border-radius:6px;"></div>
<svg class="a" style="left:1094.5px;top:325.79999999999995px;" width="24" height="24" viewBox="0 0 24 24"><path fill="#777" d="M4 21h16v2H4z"/><path fill="#777" d="M11 3h2l6 15h-2.1l-1.5-4H8.6l-1.5 4H5zM9.3 12.2h5.4L12 5.2z"/></svg>
<div class="a" style="left:1151px;top:323.29999999999995px;width:30px;height:30px;background:#1d1d1d;border-radius:5px;"></div>
<div class="a" style="left:41px;top:394.5px;width:1160px;height:68.5px;box-sizing:border-box;border:1px solid #e0e0e0;border-radius:7px;"></div>
<div class="t" style="left:62.0px;top:417.7px;font-size:20.3px;font-weight:400;color:#161616;letter-spacing:0.4px;">Column title</div>
<div class="a" style="left:1081.5px;top:403.5px;width:49.5px;height:49.5px;box-sizing:border-box;border:1px solid #e0e0e0;border-radius:6px;"></div>
<div class="a" style="left:1141.5px;top:403.5px;width:49.5px;height:49.5px;box-sizing:border-box;border:1px solid #e0e0e0;border-radius:6px;"></div>
<svg class="a" style="left:1094.5px;top:415.5px;" width="24" height="24" viewBox="0 0 24 24"><path fill="#777" d="M4 21h16v2H4z"/><path fill="#777" d="M11 3h2l6 15h-2.1l-1.5-4H8.6l-1.5 4H5zM9.3 12.2h5.4L12 5.2z"/></svg>
<div class="a" style="left:1151px;top:413.0px;width:30px;height:30px;background:#9a9a9a;border-radius:5px;background-image:linear-gradient(45deg, rgba(255,255,255,0.08) 25%, transparent 25%, transparent 75%, rgba(255,255,255,0.08) 75%),linear-gradient(45deg, rgba(255,255,255,0.08) 25%, transparent 25%, transparent 75%, rgba(255,255,255,0.08) 75%);background-size:10px 10px;background-position:0 0,5px 5px;"></div>
<div class="a" style="left:41px;top:483.29999999999995px;width:1160px;height:69px;box-sizing:border-box;border:1px solid #e0e0e0;border-radius:7px;"></div>
<div class="t" style="left:62.0px;top:507.5px;font-size:20.3px;font-weight:400;color:#161616;letter-spacing:0.4px;">Position</div>
<div class="a" style="left:916px;top:493px;width:274.5px;height:49.5px;box-sizing:border-box;border:1px solid #dadada;border-radius:5px;"></div>
<div class="t" style="left:930.5px;top:509.4px;font-size:18.7px;font-weight:400;color:#161616;">Bottom</div>
<svg class="a" style="left:1158px;top:506px;" width="24" height="24" viewBox="0 0 24 24"><path fill="#666" d="M7 10l5 5 5-5z"/></svg>
<div class="a" style="left:41px;top:573.7px;width:1160px;height:69px;box-sizing:border-box;border:1px solid #e0e0e0;border-radius:7px;"></div>
<div class="t" style="left:62.0px;top:597.8px;font-size:20.3px;font-weight:400;color:#161616;">Show values</div>
<div class="a" style="left:745px;top:587.7px;width:61px;height:40px;background:#e2e2e2;border-radius:20px;"></div>
<div class="t" style="left:745px;width:61px;text-align:center;top:597.6px;font-size:18px;color:#1c1c1c;">Min</div>
<div class="a" style="left:816px;top:587.7px;width:64px;height:40px;background:#e2e2e2;border-radius:20px;"></div>
<div class="t" style="left:816px;width:64px;text-align:center;top:597.6px;font-size:18px;color:#1c1c1c;">Max</div>
<div class="a" style="left:890px;top:587.7px;width:130px;height:40px;background:#00695c;border-radius:20px;"></div>
<svg class="a" style="left:903px;top:596px;" width="24" height="24" viewBox="0 0 24 24"><path d="M3.5 12.5l5.5 5.5L20 7" fill="none" stroke="#fff" stroke-width="2"/></svg>
<div class="t" style="left:940.0px;top:597.9px;font-size:17.6px;font-weight:400;color:#fff;">Average</div>
<div class="a" style="left:1030px;top:587.7px;width:71px;height:40px;background:#e2e2e2;border-radius:20px;"></div>
<div class="t" style="left:1030px;width:71px;text-align:center;top:597.6px;font-size:18px;color:#1c1c1c;">Total</div>
<div class="a" style="left:1111px;top:587.7px;width:79.5px;height:40px;background:#e2e2e2;border-radius:20px;"></div>
<div class="t" style="left:1111px;width:79.5px;text-align:center;top:597.6px;font-size:18px;color:#1c1c1c;">Latest</div>
<div class="a" style="left:53px;top:670px;width:33px;height:15px;background:#e0e0e0;border-radius:8px;"></div>
<div class="a" style="left:40.5px;top:664.7px;width:25px;height:25px;background:#5f5f5f;border-radius:50%;box-shadow:0 1px 3px rgba(0,0,0,0.35);"></div>
<div class="a" style="left:46.5px;top:676.2px;width:13px;height:2px;background:#fff;"></div>
<div class="t" style="left:106.0px;top:667.2px;font-size:20.4px;font-weight:400;color:#161616;">Sort datakeys in legend</div>
</div>
<div class="a" style="left:1892px;top:853px;width:5px;height:207px;background:#c9c9c9;border-radius:2px;"></div>
<div class="a" style="left:313px;top:975px;width:350px;height:105px;overflow:hidden;">
<div class="a" style="left:9.5px;top:19.700000000000045px;width:253px;height:40px;background:#e2e2e2;border-radius:20px;"></div>
<div class="a" style="left:12px;top:22.200000000000045px;width:84px;height:34.7px;box-sizing:border-box;background:#f7fbfa;border:1.5px solid #0f7a6d;border-radius:18px;"></div>
<div class="t" style="left:28.5px;top:31.1px;font-size:17.6px;font-weight:400;color:#00695c;-webkit-text-stroke:0.45px #00695c;letter-spacing:0.02px;">Footer</div>
<div class="t" style="left:111.5px;top:30.8px;font-size:18px;font-weight:400;color:#9b9b9b;">First page footer</div>
<div class="t" style="left:320.0px;top:31.1px;font-size:17.6px;font-weight:400;color:#555;-webkit-text-stroke:0.45px #555;letter-spacing:0.1px;">pse</div>
<div class="a" style="left:9px;top:73px;width:400px;height:40px;background:#fff;"></div>
<svg class="a" style="left:26px;top:72px" width="400" height="60"><rect x="1" y="1" width="398" height="58" rx="10" fill="#e6e6e6" stroke="#555" stroke-width="2" stroke-dasharray="6 4"/></svg>
</div>
<div class="a" style="left:568px;top:978px;width:70px;height:70px;background:#fff;border-radius:50%;box-shadow:0 3px 8px rgba(0,0,0,0.28);"></div>
<svg class="a" style="left:584px;top:995px;" width="38" height="38" viewBox="0 0 24 24"><path fill="#00695c" d="M16.59 8.59L12 13.17 7.41 8.59 6 10l6 6 6-6z"/></svg>
<div class="a" style="left:313px;top:1073px;width:350px;height:7px;background:#f1f1f1;"></div>
<div class="a" style="left:313px;top:1073px;width:236px;height:7px;background:#cfcfcf;"></div>
<div class="a" style="left:684px;top:484px;width:1216px;height:585px;box-sizing:border-box;border:3px solid #fec534;border-radius:11px;box-shadow:0 0 7px 2px rgba(254,190,90,0.35), inset 0 0 5px 2px rgba(254,210,150,0.35);"></div>
<svg class="a" style="left:0;top:0" width="1920" height="1080"><path d="M706 543.9 Q790.0 542.3 874 547.3 Q790.0 547.42 706 547.1 Z" fill="#fec534"/></svg>
<svg class="a" style="left:0;top:0" width="1920" height="1080"><path d="M726 877.2 Q771.5 875.8000000000001 817 879.6 Q771.5 880.28 726 880.0 Z" fill="#fec534"/></svg>
<svg class="a" style="left:0;top:0" width="1920" height="1080"><path d="M1594 874.6 Q1640.0 873.2 1686 878.8 Q1640.0 877.68 1594 877.4 Z" fill="#fec534"/></svg>
<div class="a" style="left:654px;top:855.2px;width:13px;height:3px;background:#fec534;"></div>
<div class="a" style="left:672px;top:855.2px;width:13px;height:3px;background:#fec534;"></div>
<div class="a" style="left:680.5px;top:851.5px;width:10px;height:10px;background:#fec534;border-radius:50%;"></div>
<div class="a" style="left:1760px;top:202px;width:9.3px;height:3px;background:#fec534;"></div>
<div class="a" style="left:1774.5px;top:202px;width:13px;height:3px;background:#fec534;"></div>
<div class="a" style="left:1782.8px;top:198.3px;width:10px;height:10px;background:#fec534;border-radius:50%;"></div>
<div class="a" style="left:1484.2px;top:178px;width:276.5px;height:41.7px;box-sizing:border-box;background:#fdf0de;border:3px solid #fec534;border-radius:10px;box-shadow:0 0 5px 1px rgba(254,200,110,0.3);"></div>
<div class="t" style="left:1492.0px;top:186.5px;font-size:28px;font-weight:400;color:#111;">Save the component</div>
<div class="a" style="left:1503px;top:146px;width:29.7px;height:35px;box-sizing:border-box;background:#fff;border:3px solid #fec534;border-radius:10px;box-shadow:0 0 5px 1px rgba(254,200,110,0.3);"></div>
<div class="t" style="left:1503px;width:29.7px;text-align:center;top:150.7px;font-size:27.5px;color:#111;">8</div>
<div class="a" style="left:206.3px;top:833.1px;width:449px;height:41.5px;box-sizing:border-box;background:#fdf0de;border:3px solid #fec534;border-radius:10px;box-shadow:0 0 5px 1px rgba(254,200,110,0.3);"></div>
<div class="t" style="left:214.0px;top:840.6px;font-size:28px;font-weight:400;color:#111;">Set the legend position to "Bottom"</div>
<div class="a" style="left:230.2px;top:801px;width:29.7px;height:35.6px;box-sizing:border-box;background:#fff;border:3px solid #fec534;border-radius:10px;box-shadow:0 0 5px 1px rgba(254,200,110,0.3);"></div>
<div class="t" style="left:230.2px;width:29.7px;text-align:center;top:806.0px;font-size:27.5px;color:#111;">7</div>
<svg class="a" style="left:1830px;top:212px" width="26" height="36" viewBox="1830 212 26 36">
<path d="M1839.6 217.6 Q1841 216.8 1842.4 217.6 L1842.4 222.9 L1844.9 222.9 L1845.2 223.1 L1847.9 223.1 L1848.1 224.3 L1850.6 224.5 L1851.6 226 L1851.6 232.4 L1850.1 235.4 L1849.7 238.1 L1840.3 238.1 L1840.1 236 L1838.6 233.5 L1837.1 231 L1835.3 228.1 L1835.3 226.6 L1836.9 226.3 L1839.4 228.6 Z" fill="#fff" stroke="#111" stroke-width="1.1" stroke-linejoin="round"/>
<path d="M1842.4 222.9 L1842.4 226.5 M1845.1 223.2 L1845.1 226.8 M1848 224.4 L1848 227.3" stroke="#111" stroke-width="0.9"/>
<rect x="1840.3" y="238.3" width="9.4" height="5.3" fill="#f8c73a" stroke="#111" stroke-width="1.1"/>
<rect x="1846" y="240.2" width="2" height="1.9" fill="#111"/>
</svg>
</body></html>
